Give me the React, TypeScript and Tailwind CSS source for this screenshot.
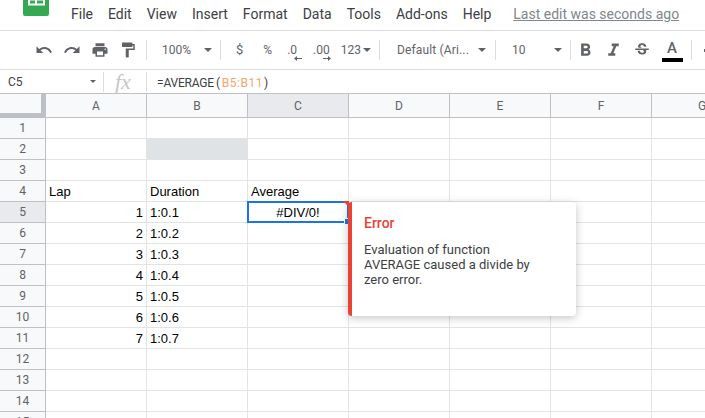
const COLS = ["A", "B", "C", "D", "E", "F", "G"];
const ROWS = Array.from({ length: 15 }, (_, i) => i + 1);
const MENU = ["File", "Edit", "View", "Insert", "Format", "Data", "Tools", "Add-ons", "Help"];

const ICONS = {
  undo: "M12.5 8c-2.65 0-5.05.99-6.9 2.6L2 7v9h9l-3.62-3.62c1.39-1.16 3.16-1.88 5.12-1.88 3.54 0 6.55 2.31 7.6 5.5l2.37-.78C21.08 11.03 17.15 8 12.5 8z",
  redo: "M18.4 10.6C16.55 8.99 14.15 8 11.5 8c-4.65 0-8.58 3.03-9.96 7.22L3.9 16c1.05-3.19 4.05-5.5 7.6-5.5 1.95 0 3.73.72 5.12 1.88L13 16h9V7l-3.6 3.6z",
  print: "M19 8H5c-1.66 0-3 1.34-3 3v6h4v4h12v-4h4v-6c0-1.66-1.34-3-3-3zm-3 11H8v-5h8v5zm3-7c-.55 0-1-.45-1-1s.45-1 1-1 1 .45 1 1-.45 1-1 1zm-1-9H6v4h12V3z",
  paint: "M18 4V3c0-.55-.45-1-1-1H5c-.55 0-1 .45-1 1v4c0 .55.45 1 1 1h12c.55 0 1-.45 1-1V6h1v4H9v11c0 .55.45 1 1 1h2c.55 0 1-.45 1-1v-9h8V4h-3z",
  bold: "M15.6 10.79c.97-.67 1.65-1.77 1.65-2.79 0-2.26-1.75-4-4-4H7v14h7.04c2.09 0 3.71-1.7 3.71-3.79 0-1.52-.86-2.82-2.15-3.42zM10 6.5h3c.83 0 1.5.67 1.5 1.5s-.67 1.5-1.5 1.5h-3v-3zm3.5 9H10v-3h3.5c.83 0 1.5.67 1.5 1.5s-.67 1.5-1.5 1.5z",
  italic: "M10 4v3h2.21l-3.42 8H6v3h8v-3h-2.21l3.42-8H18V4z",
  strike: "M7.24 8.75c-.26-.48-.39-1.03-.39-1.67 0-.61.13-1.16.4-1.67.26-.5.63-.93 1.11-1.29.48-.35 1.05-.63 1.7-.83.66-.19 1.39-.29 2.18-.29.81 0 1.54.11 2.21.34.66.22 1.23.54 1.69.94.47.4.83.88 1.08 1.43.25.55.38 1.15.38 1.81h-3.01c0-.31-.05-.59-.15-.85-.09-.27-.24-.49-.44-.68-.2-.19-.45-.33-.75-.44-.3-.1-.66-.16-1.06-.16-.39 0-.74.04-1.03.13-.29.09-.53.21-.72.36-.19.16-.34.34-.44.55-.1.21-.15.43-.15.66 0 .48.25.88.74 1.21.38.25.77.48 1.41.7H7.39c-.05-.08-.11-.17-.15-.25zM21 12v-2H3v2h9.62c.18.07.4.14.55.2.37.17.66.34.87.51.21.17.35.36.43.57.07.2.11.43.11.69 0 .23-.05.45-.14.66-.09.2-.23.38-.42.53-.19.15-.42.26-.71.35-.29.08-.63.13-1.01.13-.43 0-.83-.04-1.18-.13s-.66-.23-.91-.42c-.25-.19-.45-.44-.59-.75-.14-.31-.25-.76-.25-1.21H6.4c0 .55.08 1.13.24 1.58.16.45.37.85.65 1.21.28.35.6.66.98.92.37.26.78.48 1.22.65.44.17.9.3 1.38.39.48.08.96.13 1.44.13.8 0 1.53-.09 2.18-.28s1.21-.45 1.67-.79c.46-.34.82-.77 1.07-1.27s.38-1.07.38-1.71c0-.6-.1-1.14-.31-1.61-.05-.11-.11-.23-.17-.33H21z",
};

function Icon({ d, className }: { d: string; className: string }) {
  return (
    <svg viewBox="0 0 24 24" className={`shrink-0 ${className}`} fill="#5f6368">
      <path d={d} />
    </svg>
  );
}

function Caret({ className = "" }: { className?: string }) {
  return <span className={`h-0 w-0 shrink-0 border-x-[4px] border-t-[4px] border-x-transparent border-t-[#5f6368] ${className}`} />;
}

function Divider({ className = "" }: { className?: string }) {
  return <span className={`h-[20px] w-px shrink-0 bg-[#dadce0] ${className}`} />;
}

// values by row number
const CELLS: Record<number, string[]> = {
  4: ["Lap", "Duration", "Average"],
  5: ["1", "1:0.1"],
  6: ["2", "1:0.2"],
  7: ["3", "1:0.3"],
  8: ["4", "1:0.4"],
  9: ["5", "1:0.5"],
  10: ["6", "1:0.6"],
  11: ["7", "1:0.7"],
};

function Sheet() {
  return (
    <div className="relative grid grid-cols-[46px_101px_101px_101px_101px_101px_101px_101px] grid-rows-[24px_repeat(15,21px)] font-['Liberation_Sans',sans-serif] text-[13px] text-black">
      <div className="border-r-[5px] border-b-[5px] border-r-[#bdc1c6] border-b-[#bdc1c6] bg-[#f8f9fa]" />
      {COLS.map((c) => (
        <div
          key={c}
          className={`flex items-center justify-center border-r border-b border-r-[#c0c0c0] border-b-[#c0c0c0] font-['Roboto',sans-serif] text-[12px] text-[#5f6368] ${c === "C" ? "bg-[#e8eaed]" : "bg-[#f8f9fa]"}`}
        >
          {c}
        </div>
      ))}
      {ROWS.map((r) => (
        <div key={r} className="contents">
          <div className={`flex items-center justify-center border-r border-b border-r-[#c0c0c0] border-b-[#c0c0c0] font-['Roboto',sans-serif] text-[12px] text-[#5f6368] ${r === 5 ? "bg-[#e8eaed]" : "bg-[#f8f9fa]"}`}>
            {r}
          </div>
          {COLS.map((c, i) => {
            const value = CELLS[r]?.[i];
            const numeric = i === 0 && r > 4;
            return (
              <div
                key={c}
                className={`flex items-center overflow-hidden border-r border-b border-[#e2e3e3] px-[3px] pt-[2px] ${numeric ? "justify-end" : ""} ${r === 2 && c === "B" ? "bg-[#e0e3e6]" : "bg-white"}`}
              >
                {value}
              </div>
            );
          })}
        </div>
      ))}

      {/* selected cell */}
      <div className="absolute top-[107px] left-[247px] flex h-[22px] w-[102px] items-center justify-center border-2 border-[#1a73e8] pt-[2px]">
        #DIV/0!
        <span className="absolute top-[-2px] right-[-2px] h-0 w-0 border-t-[6px] border-l-[6px] border-t-[#ea4335] border-l-transparent" />
        <span className="absolute right-[-4px] bottom-[-4px] h-[7px] w-[7px] border border-white bg-[#1a73e8]" />
      </div>

      {/* error tooltip */}
      <div className="absolute top-[108px] left-[348px] h-[114px] w-[228px] rounded-[4px] border-l-4 border-[#ea4335] bg-white pt-[13px] pl-[12px] font-['Roboto',sans-serif] text-[13px] leading-[15px] text-[#3c4043] shadow-[0_2px_8px_rgba(60,64,67,0.3)]">
        <div className="text-[14px] leading-[16px] font-medium text-[#ea4335]">Error</div>
        <div className="mt-[11px] w-[180px]">Evaluation of function AVERAGE caused a divide by zero error.</div>
      </div>
    </div>
  );
}

export default function App() {
  return (
    <div className="h-[418px] w-[705px] overflow-hidden bg-white font-['Roboto',sans-serif]">
      {/* menu bar */}
      <div className="relative flex h-[31px] items-start gap-[15px] border-b border-[#dadce0] pt-[5px] pl-[71px] text-[14px] leading-[18px] text-[#3c4043]">
        <svg viewBox="0 0 26 21" className="absolute top-[-5px] left-[23px] h-[21px] w-[26px]">
          <rect width="26" height="21" rx="2" fill="#34a853" />
          <path d="M5 0h17v10.5H5zM7 5.5v3h5v-3zM14 5.5v3h6v-3z" fill="#fff" fillRule="evenodd" />
        </svg>
        {MENU.map((m) => (
          <span key={m}>{m}</span>
        ))}
        <span className="ml-[7px] text-[#80868b] underline">Last edit was seconds ago</span>
      </div>

      {/* toolbar */}
      <div className="flex h-[39px] items-center border-b border-[#dadce0] text-[12px] whitespace-nowrap text-[#5f6368]">
        <Icon d={ICONS.undo} className="ml-[35px] h-[18px] w-[18px]" />
        <Icon d={ICONS.redo} className="ml-[10px] h-[18px] w-[18px]" />
        <Icon d={ICONS.print} className="ml-[10px] h-[18px] w-[18px]" />
        <Icon d={ICONS.paint} className="ml-[10px] h-[18px] w-[18px]" />
        <Divider className="ml-[9px]" />
        <span className="ml-[15px]">100%</span>
        <Caret className="ml-[13px]" />
        <Divider className="ml-[8px]" />
        <span className="ml-[15px] text-[13px]">$</span>
        <span className="ml-[20px]">%</span>
        <span className="relative ml-[15px] leading-none">
          .0
          <svg viewBox="0 0 8 5" className="absolute top-[12px] left-[7px] h-[5px] w-[8px]" fill="#5f6368">
            <path d="M0 2.5 3 0v2h5v1H3v2z" />
          </svg>
        </span>
        <span className="relative ml-[16px] leading-none">
          .00
          <svg viewBox="0 0 8 5" className="absolute top-[12px] left-[10px] h-[5px] w-[8px]" fill="#5f6368">
            <path d="M8 2.5 5 0v2H0v1h5v2z" />
          </svg>
        </span>
        <span className="ml-[11px]">123</span>
        <Caret className="ml-[2px]" />
        <Divider className="ml-[8px]" />
        <span className="ml-[17px] shrink-0 tracking-[0.15px]">Default (Ari...</span>
        <Caret className="ml-[9px]" />
        <Divider className="ml-[9px]" />
        <span className="ml-[16px]">10</span>
        <Caret className="ml-[28px]" />
        <Divider className="ml-[8px]" />
        <Icon d={ICONS.bold} className="ml-[4px] h-[21px] w-[21px]" />
        <Icon d={ICONS.italic} className="ml-[7px] h-[21px] w-[21px]" />
        <Icon d={ICONS.strike} className="ml-[9px] h-[18px] w-[18px]" />
        <span className="relative mt-[2px] ml-[11px] flex h-[22px] w-[21px] shrink-0 justify-center text-[15px] leading-[17px] font-medium">
          A
          <span className="absolute bottom-0 h-[4px] w-[21px] bg-black" />
        </span>
        <Divider className="ml-[8px]" />
        <span className="ml-[12px] h-[3px] w-[2px] shrink-0 bg-[#5f6368]" />
      </div>

      {/* formula bar */}
      <div className="flex h-[24px] items-center border-b border-[#c0c0c0] text-[13px] text-[#3c4043]">
        <span className="ml-[8px] w-[82px] text-[12px]">C5</span>
        <span className="h-0 w-0 shrink-0 border-x-[3px] border-t-[3px] border-x-transparent border-t-[#5f6368]" />
        <Divider className="ml-[7px]" />
        <span className="ml-[11px] w-[30px] font-['Liberation_Serif',serif] text-[22px] leading-none text-[#c4c7c5] italic">fx</span>
        <Divider className="ml-[1px]" />
        <span className="mt-[2px] ml-[10px] text-[12px] tracking-[-0.2px]">
          =AVERAGE<span className="mx-[2px]">(</span>
          <span className="tracking-[0.5px] text-[#f5a36c]">B5:B11</span>
          <span className="ml-[1px]">)</span>
        </span>
      </div>

      <Sheet />
    </div>
  );
}
